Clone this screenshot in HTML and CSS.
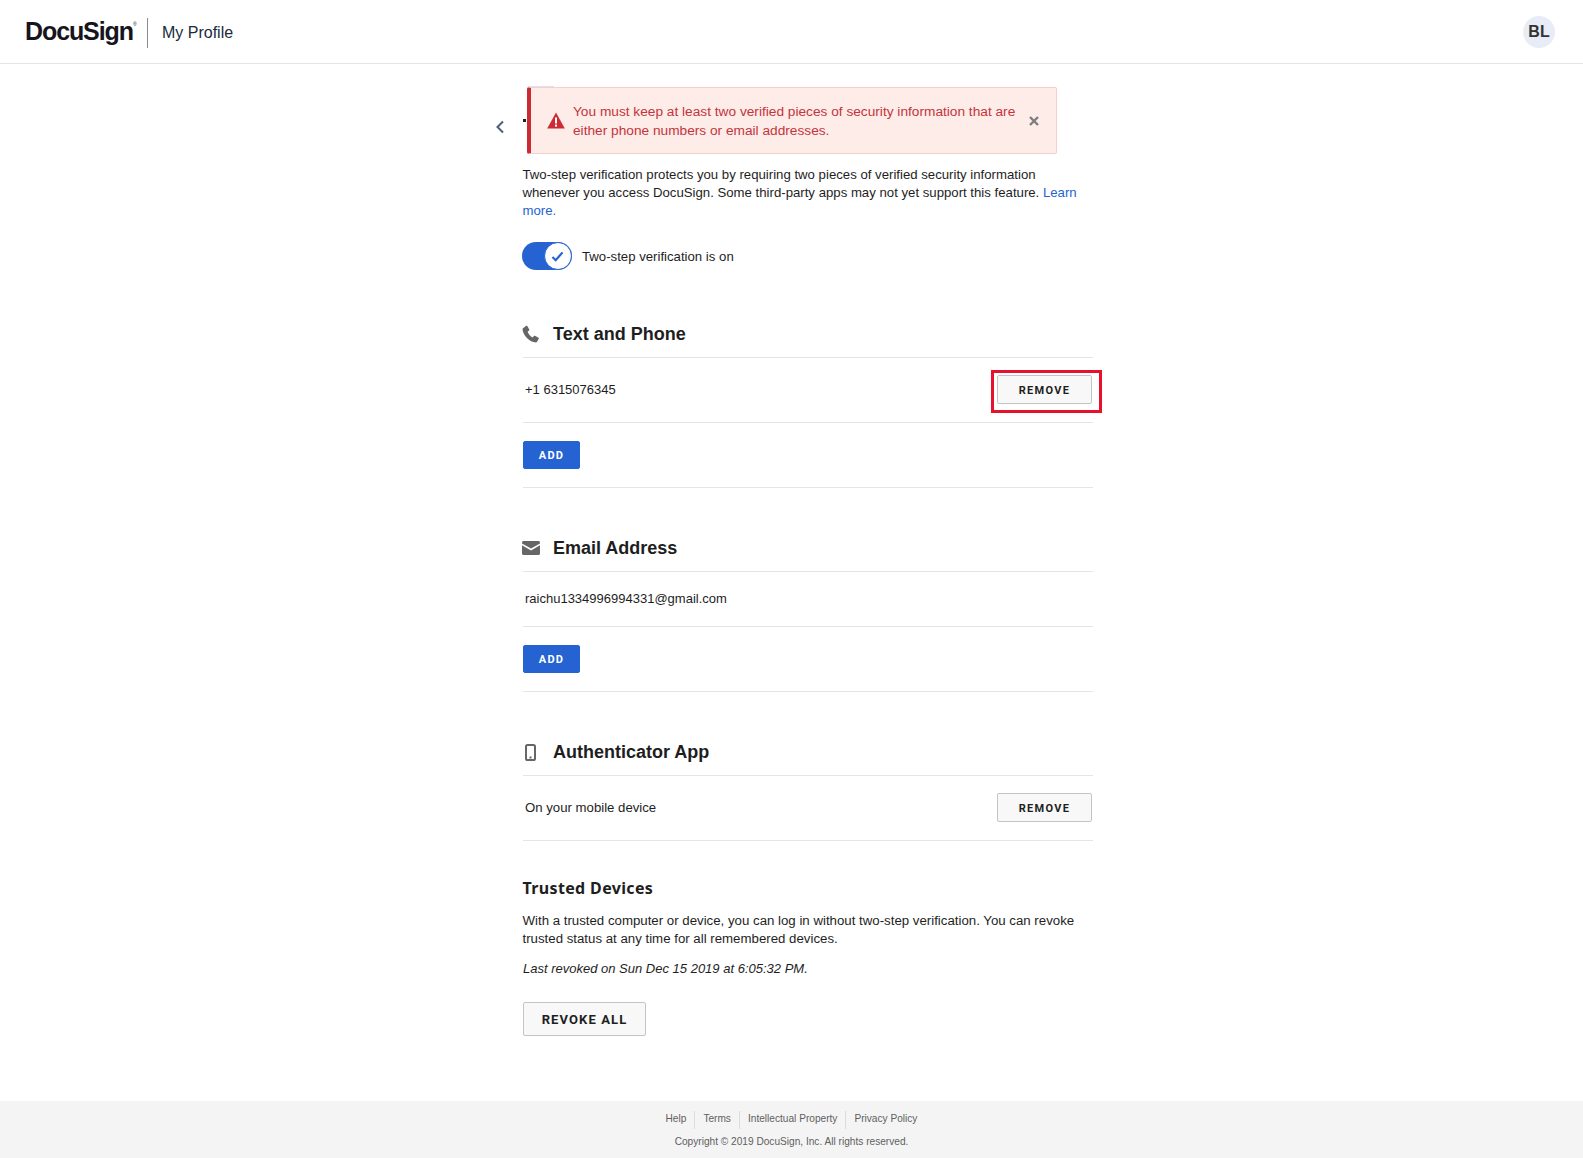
FILE: index.html
```html
<!DOCTYPE html>
<html lang="en">
<head>
<meta charset="utf-8">
<title>My Profile</title>
<link rel="stylesheet" href="styles.css">
</head>
<body>
<header class="topbar">
  <div class="brand">
    <span class="logo">DocuSign<sup class="reg">®</sup></span>
    <span class="app-name">My Profile</span>
  </div>
  <span class="avatar">BL</span>
</header>
<main class="page">
  <div class="column">
    <div class="title-row">
      <svg class="chevron" viewBox="0 0 10 14" width="10" height="14"><path d="M8 1.500 2.500 7 8 12.500" fill="none" stroke="#4b5f78" stroke-width="2"/></svg>
      <span class="title-dot"></span>
      <span class="title-sliver"></span>
    </div>
    <div class="alert">
      <svg class="alert-icon" viewBox="0 0 18 17" width="18" height="17"><path d="M9 .5 17.800 16.500H.2Z" fill="#cc2b33"/><rect x="8" y="5.500" width="2" height="6" fill="#fff"/><rect x="8" y="12.600" width="2" height="2" fill="#fff"/></svg>
      <p class="alert-text">You must keep at least two verified pieces of security information that are either phone numbers or email addresses.</p>
      <svg class="alert-close" viewBox="0 0 12 12" width="12" height="12"><path d="M2 2l8 8M10 2l-8 8" stroke="#7d7d7d" stroke-width="2.400" fill="none"/></svg>
    </div>
    <p class="intro">Two-step verification protects you by requiring two pieces of verified security information whenever you access DocuSign. Some third-party apps may not yet support this feature. <a class="link" href="#">Learn more.</a></p>
    <div class="toggle-row">
      <span class="toggle">
        <span class="knob">
          <svg class="knob-check" viewBox="0 0 14 12" width="13" height="11"><path d="M1.500 6.500 5 10l7.500-8.500" fill="none" stroke="#2463d1" stroke-width="2.400"/></svg>
        </span>
      </span>
      <span class="toggle-label">Two-step verification is on</span>
    </div>

    <section class="method first">
      <h2 class="method-head">
        <svg class="method-icon" viewBox="0 0 18 18" width="18" height="18"><path d="M1 3.200 4.200.8c.4-.3.9-.2 1.100.2l2 3.400c.2.400.1.800-.2 1.100L5.600 6.800c.6 2 2.900 4.700 5 5.700l1.300-1.500c.3-.3.800-.4 1.100-.2l3.500 1.900c.4.200.5.700.3 1.100l-1.900 3.200c-.2.300-.6.500-1 .5C7.500 17.300.9 10.200.500 4.300c0-.4.200-.8.500-1.100Z" fill="#666"/></svg>
        Text and Phone
      </h2>
      <div class="item item-tall">
        <span class="item-label">+1 6315076345</span>
        <span class="annotated">
          <button class="btn btn-small">REMOVE</button>
          <span class="red-box"></span>
        </span>
      </div>
      <div class="add-row"><button class="btn btn-primary">ADD</button></div>
    </section>

    <section class="method">
      <h2 class="method-head">
        <svg class="method-icon" viewBox="0 0 18 14" width="18" height="14"><path d="M0 2.400V1.500C0 .7.700 0 1.500 0h15c.8 0 1.500.7 1.500 1.500v.9L9 7.600Z" fill="#666"/><path d="M0 4.200V12.500c0 .8.700 1.500 1.500 1.500h15c.8 0 1.500-.7 1.500-1.500V4.200L9 9.400Z" fill="#666"/></svg>
        Email Address
      </h2>
      <div class="item item-short"><span>raichu1334996994331@gmail.com</span></div>
      <div class="add-row"><button class="btn btn-primary">ADD</button></div>
    </section>

    <section class="method">
      <h2 class="method-head">
        <svg class="method-icon" viewBox="0 0 18 17" width="18" height="17"><rect x="4" y="1" width="9" height="15" rx="1.600" fill="none" stroke="#666" stroke-width="2"/><rect x="7.500" y="12.500" width="2" height="2" fill="#666"/></svg>
        Authenticator App
      </h2>
      <div class="item item-tall">
        <span class="item-label item-label-wide">On your mobile device</span>
        <span class="annotated">
          <button class="btn btn-small">REMOVE</button>
        </span>
      </div>
    </section>

    <section class="trusted">
      <h3 class="trusted-title">Trusted Devices</h3>
      <p class="trusted-text">With a trusted computer or device, you can log in without two-step verification. You can revoke trusted status at any time for all remembered devices.</p>
      <p class="trusted-note">Last revoked on Sun Dec 15 2019 at 6:05:32 PM.</p>
      <button class="btn btn-large">REVOKE ALL</button>
    </section>
  </div>
</main>
<footer class="footer">
  <nav class="footer-links">
    <a href="#">Help</a>
    <a href="#">Terms</a>
    <a href="#">Intellectual Property</a>
    <a href="#">Privacy Policy</a>
  </nav>
  <p class="copyright">Copyright © 2019 DocuSign, Inc. All rights reserved.</p>
</footer>
</body>
</html>
```
FILE: styles.css
```css
* { box-sizing: border-box; }
html, body { margin: 0; padding: 0; }
body {
  min-height: 1158px;
  display: flex;
  flex-direction: column;
  font-family: "Liberation Sans", Arial, sans-serif;
  font-size: 13px;
  line-height: 18px;
  color: #1e1e1e;
  background: #fff;
}
.topbar {
  height: 64px;
  flex: none;
  display: flex;
  align-items: center;
  justify-content: space-between;
  padding: 0 28px 0 25px;
  border-bottom: 1px solid #e6e6e6;
}
.brand { display: flex; align-items: center; margin-top: 2px; }
.logo {
  font-size: 25px;
  font-weight: 700;
  letter-spacing: -1.1px;
  line-height: 27px;
  color: #16141d;
  height: 30px;
  width: 123px;
  flex: none;
  border-right: 1px solid #8c8c8c;
  white-space: nowrap;
}
.reg { font-size: 5px; font-weight: 400; letter-spacing: 0; vertical-align: 14px; line-height: 0; }
.app-name { margin-left: 14px; font-size: 16px; color: #1b2a3d; }
.avatar {
  width: 32px;
  height: 32px;
  border-radius: 50%;
  background: #e8ecf7;
  color: #333;
  font-size: 16px;
  font-weight: 700;
  display: flex;
  align-items: center;
  justify-content: center;
}
.page { flex: 1; }
.column {
  position: relative;
  width: 603px;
  margin: 0 auto;
  padding-left: 33px;
}
.title-row {
  height: 102px;
  position: relative;
}
.chevron { position: absolute; left: -28px; top: 56px; }
.title-dot {
  position: absolute;
  left: 0;
  top: 55px;
  width: 3px;
  height: 3px;
  background: #1e1e1e;
}
.title-sliver {
  position: absolute;
  left: 5px;
  top: 22px;
  width: 26px;
  height: 1px;
  background: #dde2ec;
}
.alert {
  position: absolute;
  left: 37px;
  top: 23px;
  width: 530px;
  height: 67px;
  display: flex;
  align-items: center;
  background: #feece9;
  border: 1px solid #f6cfcb;
  border-left: 4px solid #cc2b33;
  border-radius: 2px;
  padding-left: 16px;
}
.alert-icon { flex: none; }
.alert-text {
  margin: 1px 0 0 8px;
  width: 450px;
  font-size: 13.7px;
  line-height: 19px;
  color: #c4343b;
}
.alert-close { flex: none; margin-left: 5px; }
.intro { margin: 0 0 0 -.5px; width: 560px; font-size: 13.2px; }
.link { color: #2463d1; text-decoration: none; }
.toggle-row { margin: 22px 0 0 -1px; display: flex; align-items: center; }
.toggle {
  width: 50px;
  height: 28px;
  border-radius: 14px;
  background: #2463d1;
  display: flex;
  justify-content: flex-end;
}
.knob {
  width: 28px;
  height: 28px;
  border-radius: 50%;
  background: #fff;
  border: 1px solid #2463d1;
  display: flex;
  align-items: center;
  justify-content: center;
}
.knob-check { margin-right: 2px; }
.toggle-label { margin: 2px 0 0 10px; font-size: 13.2px; }
.method { margin-top: 46px; }
.method.first { margin-top: 50px; }
.method-head {
  margin: 0;
  height: 38px;
  display: flex;
  align-items: center;
  padding-bottom: 9px;
  font-size: 18px;
  font-weight: 700;
  color: #1e1e1e;
  border-bottom: 1px solid #e4e4e4;
}
.method-icon { width: 18px; margin: 0 13px 0 -1px; flex: none; }
.item {
  display: flex;
  justify-content: space-between;
  padding-left: 2px;
  border-bottom: 1px solid #e4e4e4;
}
.item-tall { height: 65px; padding-top: 17px; align-items: flex-start; }
.item-label { line-height: 29px; }
.item-label-wide { font-size: 13.2px; }
.item-short { height: 55px; padding-top: 18px; }
.add-row { padding: 18px 0 18px; border-bottom: 1px solid #e4e4e4; }
.btn {
  display: block;
  font-family: Roboto, "Liberation Sans", sans-serif;
  font-weight: 700;
  border-radius: 2px;
  border: 1px solid #c4c4c4;
  background: #f8f8f8;
  color: #1e1e1e;
  padding: 0;
}
.btn-small { width: 95px; height: 29px; padding-top: 1px; font-size: 11px; letter-spacing: 1.3px; }
.btn-primary { width: 57px; height: 28px; font-size: 11px; letter-spacing: 1.3px; background: #2463d1; border-color: #2463d1; color: #fff; }
.btn-large { width: 123px; height: 34px; font-size: 13px; letter-spacing: 1.1px; margin-top: 24px; }
.annotated { position: relative; display: block; margin-right: 1px; }
.red-box {
  position: absolute;
  left: -6px;
  top: -5px;
  width: 111px;
  height: 43px;
  border: 3px solid #e8112d;
}
.trusted { padding-top: 35px; }
.trusted-title {
  margin: 0 0 12px -.5px;
  font-family: "Noto Sans", "Liberation Sans", sans-serif;
  font-size: 16px;
  line-height: 24px;
  font-weight: 700;
  letter-spacing: .35px;
  color: #1e1e1e;
}
.trusted-text { margin: 0 0 0 -.5px; width: 560px; font-size: 13.25px; }
.trusted-note { margin: 12px 0 0; font-style: italic; }
.footer {
  flex: none;
  height: 57px;
  background: #f4f4f4;
  padding-top: 10px;
  color: #5f5f5f;
  font-size: 10.15px;
  text-align: center;
}
.footer-links { display: flex; justify-content: center; height: 18px; }
.footer-links a {
  color: #5f5f5f;
  text-decoration: none;
  padding: 0 8px;
  line-height: 16px;
  border-left: 1px solid #dcdcdc;
}
.footer-links a:first-child { border-left: 0; }
.copyright { margin: 6px 0 0; line-height: 14px; }
```
